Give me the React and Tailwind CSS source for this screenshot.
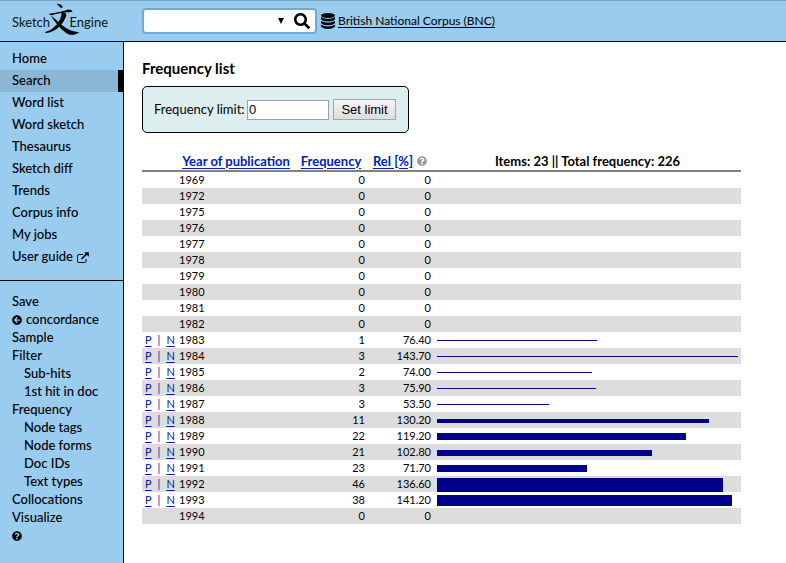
import { FaArrowCircleLeft, FaQuestionCircle, FaSearch } from "react-icons/fa";

const navItems = [
  "Home", "Search", "Word list", "Word sketch", "Thesaurus",
  "Sketch diff", "Trends", "Corpus info", "My jobs", "User guide",
];

const actions = [
  { label: "Save" },
  { label: "concordance", icon: true },
  { label: "Sample" },
  { label: "Filter" },
  { label: "Sub-hits", nested: true },
  { label: "1st hit in doc", nested: true },
  { label: "Frequency" },
  { label: "Node tags", nested: true },
  { label: "Node forms", nested: true },
  { label: "Doc IDs", nested: true },
  { label: "Text types", nested: true },
  { label: "Collocations" },
  { label: "Visualize" },
];

const rows = [
  ["1969", "0", "0"], ["1972", "0", "0"], ["1975", "0", "0"], ["1976", "0", "0"],
  ["1977", "0", "0"], ["1978", "0", "0"], ["1979", "0", "0"], ["1980", "0", "0"],
  ["1981", "0", "0"], ["1982", "0", "0"],
  ["1983", "1", "76.40", 160, 1],
  ["1984", "3", "143.70", 301, 1],
  ["1985", "2", "74.00", 155, 1],
  ["1986", "3", "75.90", 159, 1],
  ["1987", "3", "53.50", 112, 1],
  ["1988", "11", "130.20", 272, 4],
  ["1989", "22", "119.20", 249, 7],
  ["1990", "21", "102.80", 215, 6],
  ["1991", "23", "71.70", 150, 7],
  ["1992", "46", "136.60", 286, 14],
  ["1993", "38", "141.20", 295, 11],
  ["1994", "0", "0"],
];

function ExternalIcon() {
  return (
    <svg viewBox="0 0 12 11" className="h-[11px] w-3" fill="none" stroke="currentColor" aria-hidden="true">
      <path d="M6 2.5H2Q.5 2.5.5 4v5Q.5 10.500 2 10.500h5.500Q9 10.500 9 9V7" strokeWidth="1" />
      <path d="M4.500 7 10 1.500" strokeWidth="1.600" />
      <path d="M7.200.200H11.800V4.800Z" fill="currentColor" stroke="none" />
    </svg>
  );
}

function Logo() {
  return (
    <a href="#home" className="relative flex h-9 w-24 items-center justify-between pt-[3px] text-[13px] text-[#111]" aria-label="Sketch Engine">
      <span>Sketch</span>
      <svg viewBox="0 0 36 32" className="absolute left-[33px] top-0 h-8 w-9" fill="#000" aria-hidden="true">
        <path d="M11.500.800C14 .800 17.500 2 17.600 3.800C17.600 5.300 16 5.200 15 4.200C14 3 13 1.900 11.500.800Z" />
        <path d="M4 10.800C8 10.300 18 8.500 22.500 6.700C24 6.100 27.500 7.200 27.400 8.500C27.200 9.300 25 9 22 9.300C16 9.900 10.500 10.800 7 12.200C5.500 12.500 4.500 11.800 4 10.800Z" />
        <path d="M16.800 9.300C20 9.300 22 10.800 21.200 13C18.500 20.500 12 28.500 1.500 30C-.500 30-.500 29 1 28.700C9.500 26.500 16 18 16.800 9.300Z" />
        <path d="M6 13C11 15.500 15 21.500 21 25C25 27.500 28 28.500 34.500 29.200C31.500 31.300 27 32.500 24 31.500C17 28.500 11 20 6 13Z" />
      </svg>
      <span>Engine</span>
    </a>
  );
}

export default function App() {
  return (
    <div className="flex min-h-screen flex-col bg-white font-['Lato',sans-serif] text-xs text-black">
      <header className="flex h-[42px] items-center border-b border-t border-b-black border-t-[#7ba6c4] bg-[#99ccee]">
        <div className="w-[142px] shrink-0 pl-3">
          <Logo />
        </div>
        <form className="flex h-[26px] w-[175px] items-center rounded border-2 border-[#73a8d0] bg-white" onSubmit={(e) => e.preventDefault()}>
          <input aria-label="Search corpus" className="h-5 min-w-0 flex-1 bg-transparent px-1 outline-none" />
          <button type="button" aria-label="Show options" className="flex w-4 justify-center">
            <svg viewBox="0 0 6 6" className="size-[6px]" aria-hidden="true"><path d="M0 0H6L3 6Z" /></svg>
          </button>
          <button type="submit" aria-label="Search" className="flex w-[26px] justify-center">
            <FaSearch className="size-4" />
          </button>
        </form>
        <a href="#corpus" className="ml-1 flex items-center gap-[3px]">
          <svg viewBox="0 0 14 16" className="h-4 w-[14px]" aria-hidden="true">
            <ellipse cx="7" cy="2.500" rx="7" ry="2.500" />
            <path d="M0 4.200Q7 7.800 14 4.200V6.300Q12 8.500 7 8.500T0 6.300Z" />
            <path d="M0 8Q7 11.600 14 8V10Q12 12.200 7 12.200T0 10Z" />
            <path d="M0 11.800Q7 15.400 14 11.800V13.600Q12 16 7 16T0 13.600Z" />
          </svg>
          <span className="underline underline-offset-2">British National Corpus (BNC)</span>
        </a>
      </header>

      <div className="flex flex-1">
        <aside className="w-[124px] shrink-0 border-r border-black bg-[#99ccee] text-[13px] font-medium">
          <nav className="border-b border-black pb-3 pt-[6px]" aria-label="Main">
            {navItems.map((item) => (
              <a
                key={item}
                href="#nav"
                className={
                  item === "Search"
                    ? "flex h-[22px] items-center border-r-[5px] border-black bg-[#8ab7d6] pl-3"
                    : "flex h-[22px] items-center gap-1 pl-3"
                }
              >
                {item}
                {item === "User guide" && <ExternalIcon />}
              </a>
            ))}
          </nav>
          <nav className="pt-3" aria-label="Concordance">
            {actions.map((a) => (
              <a
                key={a.label}
                href="#action"
                className={a.nested ? "flex h-[18px] items-center pl-6" : "flex h-[18px] items-center gap-1 pl-3"}
              >
                {a.icon && <FaArrowCircleLeft className="size-[10px]" />}
                {a.label}
              </a>
            ))}
            <a href="#help" aria-label="Help" className="flex h-[18px] items-center pl-3">
              <FaQuestionCircle className="size-[10px]" />
            </a>
          </nav>
        </aside>

        <main className="min-w-0 flex-1 pl-[18px] pt-4">
          <h1 className="text-[15px] font-bold leading-5">Frequency list</h1>

          <form className="mt-2 flex h-[47px] w-[267px] items-center rounded-[5px] border border-black bg-[#dceeed] pl-[11px]" onSubmit={(e) => e.preventDefault()}>
            <label htmlFor="limit" className="w-[93px] text-[13px]">Frequency limit:</label>
            <input
              id="limit"
              defaultValue="0"
              className="h-5 w-[82px] border border-[#a0a0a0] bg-white px-px font-['Liberation_Sans',sans-serif] text-[13px]"
            />
            <button className="ml-1 h-[21px] w-[63px] border border-[#a5a5a5] bg-linear-to-b from-[#f6f6f6] to-[#dddddd] font-['Liberation_Sans',sans-serif] text-[13px] leading-none">
              Set limit
            </button>
          </form>

          <table className="mt-[18px] w-[599px] table-fixed border-collapse">
            <colgroup>
              <col className="w-9" />
              <col className="w-[116px]" />
              <col className="w-[74px]" />
              <col className="w-[66px]" />
              <col />
            </colgroup>
            <thead>
              <tr className="h-5 border-b-2 border-[#808080] text-[13px] font-semibold leading-4">
                <th className="p-0"></th>
                <th className="p-0 text-[#0022aa]"><a href="#year" className="underline underline-offset-2">Year of publication</a></th>
                <th className="p-0 text-[#0022aa]"><a href="#freq" className="underline underline-offset-2">Frequency</a></th>
                <th className="p-0 pr-[7px] text-[#0022aa]">
                  <span className="flex items-center justify-end gap-1">
                    <a href="#rel" className="underline underline-offset-2">Rel [%]</a>
                    <FaQuestionCircle className="size-[10px] text-[#999]" />
                  </span>
                </th>
                <th className="p-0">Items: 23 || Total frequency: 226</th>
              </tr>
            </thead>
            <tbody>
              {rows.map(([year, freq, rel, width, height]) => (
                <tr key={year} className="h-4 text-[11px] leading-4 even:bg-[#dddddd]">
                  <td className="p-0 pl-[3px] text-[#0022aa]">
                    {width && (
                      <span className="flex gap-[6px]">
                        <a href="#p" className="underline underline-offset-2">P</a>
                        <span>|</span>
                        <a href="#n" className="underline underline-offset-2">N</a>
                      </span>
                    )}
                  </td>
                  <td className="p-0 pl-px">{year}</td>
                  <td className="p-0 pr-[3px] text-right">{freq}</td>
                  <td className="p-0 pr-[3px] text-right">{rel}</td>
                  <td className="p-0 pl-[3px]">
                    {width && (
                      <div className="flex h-4 items-center pt-px">
                        <div className="bg-[#000088]" style={{ width, height }} />
                      </div>
                    )}
                  </td>
                </tr>
              ))}
            </tbody>
          </table>
        </main>
      </div>
    </div>
  );
}
